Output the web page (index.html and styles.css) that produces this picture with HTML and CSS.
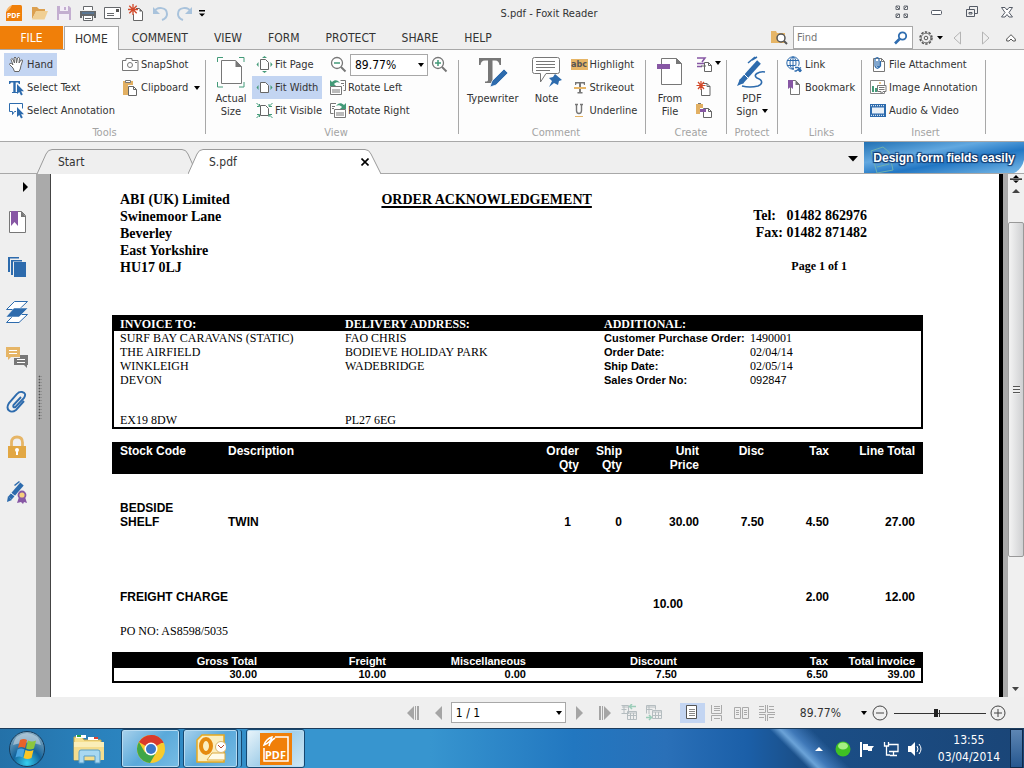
FILE: index.html
```html
<!DOCTYPE html>
<html lang="en">
<head>
<meta charset="utf-8">
<title>S.pdf - Foxit Reader</title>
<link rel="stylesheet" href="styles.css">
</head>
<body>
<div class="app">
<header class="titlebar">
  <div class="quick">
    <button class="ib" aria-label="Foxit Reader"><svg width="18" height="18" viewBox="0 0 18 18"><path d="M7 1h8.500q1.500 0 1.500 1.500V17H1V8z" fill="#f07f09"/><path d="M1 8c1-4 3-6 6-7-1 3-3 5-6 7z" fill="#f9b466"/><text x="2" y="14" font-size="7" font-weight="bold" fill="#fff">PDF</text></svg></button>
    <button class="ib" aria-label="Open"><svg width="18" height="16" viewBox="0 0 18 16"><path d="M1 14V2h5l2 2h6v3H5z" fill="#dca050"/><path d="M1 14.500L5 6h12l-3.500 8.500z" fill="#f0cf94"/></svg></button>
    <button class="ib" aria-label="Save"><svg width="16" height="16" viewBox="0 0 16 16"><path d="M1 1h12l2 2v12H1z" fill="#c3aed0"/><path d="M4 1h8v5H4zM3 9h10v6H3z" fill="#f3eef6"/><path d="M8 2h2v3H8z" fill="#c3aed0"/></svg></button>
    <button class="ib" aria-label="Print"><svg width="18" height="17" viewBox="0 0 18 17"><path d="M4.500 5V1.500h9V5" fill="#fff" stroke="#66696c"/><path d="M1 6h16v7h-2v-2H3v2H1z" fill="#66696c"/><path d="M3 8h12" stroke="#4f86bb"/><path d="M4.500 11v4.500h9V11M6 13.500h6" fill="#fff" stroke="#66696c"/></svg></button>
    <button class="ib" aria-label="Email"><svg width="17" height="14" viewBox="0 0 17 14"><path d="M.5 1.500h16v11H.5z" fill="#fff" stroke="#66696c"/><path d="M3 7.500h7M3 9.500h7" stroke="#66696c"/><path d="M12 3h3v3h-3z" fill="#555"/></svg></button>
    <button class="ib" aria-label="New"><svg width="18" height="18" viewBox="0 0 18 18"><path d="M9 4.500h3.500l3 3v9h-9V10" fill="#fff" stroke="#666"/><path d="M12.500 4.500v3h3" fill="#666"/><path d="M6 0v11M1 5.500h10M2.300 1.800l7.400 7.400M9.700 1.800L2.300 9.200" stroke="#d2492a" stroke-width="1.300"/></svg></button>
    <button class="ib" aria-label="Undo"><svg width="17" height="16" viewBox="0 0 17 16"><path d="M2 7c3-6 13-5 13 2 0 3-2 5-5 6" fill="none" stroke="#a9c3dc" stroke-width="2"/><path d="M1 2v7h7z" fill="#a9c3dc"/></svg></button>
    <button class="ib" aria-label="Redo"><svg width="17" height="16" viewBox="0 0 17 16"><path d="M15 7C12 1 2 2 2 9c0 3 2 5 5 6" fill="none" stroke="#a9c3dc" stroke-width="2"/><path d="M16 2v7H9z" fill="#a9c3dc"/></svg></button>
    <button class="ib narrow" aria-label="Customize"><svg width="6" height="7" viewBox="0 0 6 7"><path d="M0 0h6v1.500H0zM0 3.500h6L3 6.500z" fill="#000"/></svg></button>
  </div>
  <h1>S.pdf - Foxit Reader</h1>
  <div class="winbtns">
    <button class="ib" aria-label="Full screen"><svg width="14" height="14" viewBox="0 0 14 14" fill="none" stroke="#666b73"><path d="M1 1h3.500v3.500H1zM9 1h3.500v3.500H9zM1 9h3.500v3.500H1zM9 9h3.500v3.500H9z"/><path d="M1 1l3 3M12 1L9 4M1 12l3-3M12 12L9 9"/></svg></button>
    <button class="ib" aria-label="Minimize"><svg width="12" height="5" viewBox="0 0 12 5"><rect x=".5" y=".5" width="10" height="4" rx="1" fill="#fff" stroke="#555b66"/></svg></button>
    <button class="ib" aria-label="Restore"><svg width="12" height="12" viewBox="0 0 12 12" fill="none" stroke="#555b66"><path d="M3.500 3V.5h8v7H9M.5 3.500h8v7h-8zM3 6.500h3v1.500H3z"/></svg></button>
    <button class="ib" aria-label="Close"><svg width="12" height="11" viewBox="0 0 12 11"><path d="M.5.5h3.500l2 2.500 2-2.500h3.500L8 5.500l3.500 4.500H8L6 7.500 4 10H.5L4 5.500z" fill="#fff" stroke="#555b66"/></svg></button>
  </div>
</header>
<nav class="menu">
  <button class="file">FILE</button>
  <button class="on">HOME</button>
  <button>COMMENT</button><button>VIEW</button><button>FORM</button><button>PROTECT</button><button>SHARE</button><button>HELP</button>
  <div class="find">
    <svg width="17" height="15" viewBox="0 0 17 15"><path d="M0 13V1h5l1 2h8v10z" fill="#e6b566"/><circle cx="10" cy="8" r="4" fill="#fff" stroke="#555" stroke-width="1.500"/><path d="M13 11l3 3" stroke="#555" stroke-width="2"/></svg>
    <div class="findbox"><input type="text" placeholder="Find" aria-label="Find"><button class="plain" aria-label="Search"><svg width="14" height="14" viewBox="0 0 14 14" fill="none" stroke="#2f6db0"><circle cx="8.500" cy="5" r="3.700" stroke-width="1.800"/><path d="M5.500 8L1 12.500" stroke-width="2.600"/></svg></button></div>
    <button class="plain gear" aria-label="Settings"><svg width="24" height="14" viewBox="0 0 24 14"><circle cx="7" cy="7" r="6" fill="none" stroke="#555" stroke-width="1.500" stroke-dasharray="2.400 1.370"/><circle cx="7" cy="7" r="4.800" fill="#efefef" stroke="#555" stroke-width=".8"/><circle cx="7" cy="7" r="1.800" fill="none" stroke="#555"/><path d="M18 5h6l-3 3.500z"/></svg></button>
    <button class="plain" aria-label="Previous"><svg width="9" height="14" viewBox="0 0 9 14"><path d="M7.500 1v12L1 7z" fill="none" stroke="#b4b4b4"/></svg></button>
    <button class="plain nx" aria-label="Next"><svg width="9" height="14" viewBox="0 0 9 14"><path d="M1.500 1v12L8 7z" fill="none" stroke="#b4b4b4"/></svg></button>
    <button class="plain" aria-label="Collapse ribbon"><svg width="10" height="8" viewBox="0 0 10 8"><path d="M5 .7l4.300 4.300v2H7L5 5 3 7H.7V5z" fill="#fff" stroke="#555"/></svg></button>
  </div>
</nav>
<section class="ribbon">
  <div class="group tools">
    <div class="cols">
      <div class="col">
        <button class="cmd sel"><svg width="17" height="17" viewBox="0 0 17 17"><path d="M5 12L1.500 8.500q0-2 2 -1L5 9 3 3.500q.5-2 2 0L6.500 7 6 2q1-2 2 0l.5 5 1-5q1.500-1.500 2 .2L11 7l2-3q1.700-.6 1.500 1L13 9.500q-.5 4-2 6H6.500z" fill="#fff" stroke="#666"/></svg>Hand</button>
        <button class="cmd"><svg width="17" height="17" viewBox="0 0 17 17"><path d="M1 2h11v3h-1l-1-1.500H7.700V13H9v1H4v-1h1.300V3.500H3L2 5H1z" fill="#2d6bad"/><path d="M9 5v10l2.300-2 1.700 3.500 1.800-.9-1.700-3.400H16z" fill="#2d6bad"/></svg>Select Text</button>
        <button class="cmd"><svg width="17" height="17" viewBox="0 0 17 17"><path d="M8 9.500H6.500l-2 3v-3h-3v-8h13v5" fill="#fff" stroke="#2d6bad"/><path d="M9 5v10l2.300-2 1.700 3.500 1.800-.9-1.700-3.400H16z" fill="#2d6bad"/></svg>Select Annotation</button>
      </div>
      <div class="col">
        <button class="cmd"><svg width="17" height="13" viewBox="0 0 17 13"><path d="M.5 2.500H4V.5h6v2h6v10H.5z" fill="#fff" stroke="#777"/><circle cx="8" cy="7" r="2.500" fill="none" stroke="#777"/><path d="M13 4.500h2" stroke="#777"/></svg>SnapShot</button>
        <button class="cmd"><svg width="17" height="17" viewBox="0 0 17 17"><path d="M2 2h9v4H6v10H1V2z" fill="#e2b063"/><path d="M3.500 3.500v-2h5v2z" fill="#fff" stroke="#777"/><path d="M6.500 7.500h5l3 3v6h-8z" fill="#fff" stroke="#666"/><path d="M11.500 7.500v3h3" fill="none" stroke="#666"/></svg>Clipboard<i class="dn"></i></button>
      </div>
    </div>
    <p>Tools</p>
  </div><span class="sep"></span>
  <div class="group view">
    <div class="cols">
      <button class="big"><svg width="30" height="32" viewBox="0 0 30 32"><path d="M1.500 6V1.500H7M23 1.500h5V6M1.500 26v5H7M23 31h5v-5" fill="none" stroke="#439a78"/><path d="M5.500 4.500h14l6 6v17h-20z" fill="#fff" stroke="#777"/><path d="M19.500 4v7h6.500z" fill="#777"/></svg>Actual<br>Size</button>
      <div class="col fit">
        <button class="cmd"><svg width="17" height="17" viewBox="0 0 17 17"><path d="M4.500 3.500h5l3 3v7h-8z" fill="#fff" stroke="#666"/><path d="M6 2l2.500-2L11 2zM6 15l2.500 2 2.500-2zM2.500 6v5L.5 8.500zM14.500 6v5l2-2.500z" fill="#439a78"/></svg>Fit Page</button>
        <button class="cmd sel"><svg width="17" height="17" viewBox="0 0 17 17"><path d="M4.500 3.500h5l3 3v7h-8z" fill="#fff" stroke="#666"/><path d="M2.500 6v5L.5 8.500zM14.500 6v5l2-2.500z" fill="#439a78"/></svg>Fit Width</button>
        <button class="cmd"><svg width="17" height="17" viewBox="0 0 17 17"><path d="M4.500 3.500h5l3 3v7h-8z" fill="#fff" stroke="#666"/><path d="M1 4.500h2.500V2M.5 1l3 3M13 2v2.500h3M16.500 1l-3 3M1 12.500h2.500V15M.5 16l3-3M13 15v-2.500h3M16.500 16l-3-3" fill="none" stroke="#439a78"/></svg>Fit Visible</button>
      </div>
      <div class="col rot">
        <div class="zoomrow"><button class="plain" aria-label="Zoom out"><svg width="17" height="17" viewBox="0 0 17 17"><circle cx="7" cy="7" r="5.500" fill="#fff" stroke="#777" stroke-width="1.300"/><path d="M11 11l4.500 4.500" stroke="#777" stroke-width="2"/><path d="M4 7h6" stroke="#439a78" stroke-width="1.500"/></svg></button>
        <span class="combo"><select aria-label="Zoom"><option>89.77%</option></select></span>
        <button class="plain" aria-label="Zoom in"><svg width="17" height="17" viewBox="0 0 17 17"><circle cx="7" cy="7" r="5.500" fill="#fff" stroke="#777" stroke-width="1.300"/><path d="M11 11l4.500 4.500" stroke="#777" stroke-width="2"/><path d="M4 7h6M7 4v6" stroke="#439a78" stroke-width="1.500"/></svg></button></div>
        <button class="cmd"><svg width="17" height="17" viewBox="0 0 17 17"><path d="M10.500 1.500h5v10h-2M11 4.500h3M13 6.500h1M.5 7.500h11v8H.5z" fill="#fff" stroke="#777"/><path d="M3 10v4M5 10v4M7 10v4M9 10v4" stroke="#777"/><path d="M0 1v6h6L4 5c2-2 4-2 6-1C8 1 5 0 2 3z" fill="#439a78"/></svg>Rotate Left</button>
        <button class="cmd"><svg width="17" height="17" viewBox="0 0 17 17"><path d="M6 1.500H.5v10h3M2 4.500h3M2 6.500h2M4.500 7.500h11v8h-11z" fill="#fff" stroke="#777"/><path d="M7 10v4M9 10v4M11 10v4M13 10v4" stroke="#777"/><path d="M16 1v6h-6l2-2c-2-2-4-2-6-1C8 1 11 0 14 3z" fill="#439a78"/></svg>Rotate Right</button>
      </div>
    </div>
    <p>View</p>
  </div><span class="sep"></span>
  <div class="group comment">
    <div class="cols">
      <button class="big"><svg width="32" height="32" viewBox="0 0 32 32"><path d="M2 2h22v7h-1.500c-.5-3-1.500-4.500-4.500-4.500h-2.500V24c0 1 1 1.500 3 1.500V27H8v-1.500c2 0 3-.5 3-1.500V4.500H8C5 4.500 4 6 3.500 9H2z" fill="#777"/><path d="M15 25L27 13l4 4-12 12-6 2z" fill="#2d6bad" stroke="#fff" stroke-width=".7"/></svg>Typewriter</button>
      <button class="big note"><svg width="32" height="32" viewBox="0 0 32 32"><path d="M3.500 1.500h23q2 0 2 2v12q0 2-2 2H15L9.500 26v-8.500h-6q-2 0-2-2v-12q0-2 2-2z" fill="#fff" stroke="#777"/><path d="M5 5.500h19M5 8.500h19M5 11.500h19M5 14.500h14" stroke="#777"/><path d="M24 18l7 6-3 1-1 4-4-2-5 4 3-6-3-3 4-1z" fill="#2d6bad"/></svg>Note</button>
      <div class="col">
        <button class="cmd"><span class="abc">abc</span>Highlight</button>
        <button class="cmd"><svg width="17" height="15" viewBox="0 0 17 15"><path d="M4 2h10v3h-1l-.5-1.500H10V12h1.500v1.500h-5V12H8V3.500H5.500L5 5H4z" fill="#777"/><path d="M3 8h12" stroke="#e6b566" stroke-width="2"/></svg>Strikeout</button>
        <button class="cmd"><svg width="17" height="15" viewBox="0 0 17 15"><path d="M4 1.500h3M9 1.500h3M5.500 1.500v6q0 3 2.500 3t2.500-3v-6" fill="none" stroke="#777" stroke-width="1.400"/><path d="M4 13.500h8" stroke="#e6b566"/></svg>Underline</button>
      </div>
    </div>
    <p>Comment</p>
  </div><span class="sep"></span>
  <div class="group create">
    <div class="cols">
      <button class="big"><svg width="28" height="32" viewBox="0 0 28 32"><path d="M5.500 2.500h15l5 5v21h-20z" fill="#fff" stroke="#777"/><path d="M20 2v6h6z" fill="#777"/><path d="M1 8h13v5H1z" fill="#8757a4"/></svg>From<br>File</button>
      <div class="col">
        <button class="cmd" aria-label="From scanner"><svg width="17" height="16" viewBox="0 0 17 16"><path d="M1 1h8l-3 4M1 6.500h7M1 9.500h5" fill="none" stroke="#8757a4" stroke-width="1.500"/><path d="M8.500 5.500h4l3 3v6h-7z" fill="#fff" stroke="#666"/><path d="M12.500 5.500v3h3M5 9h5" fill="none" stroke="#666"/></svg><i class="dn"></i></button>
        <button class="cmd" aria-label="Blank"><svg width="17" height="16" viewBox="0 0 17 16"><path d="M7 3.500h4l3 3v9H5.500V9" fill="#fff" stroke="#666"/><path d="M11 3.500v3h3" fill="none" stroke="#666"/><path d="M5 1v9M.5 5.500h9M2 2l6 7M8 2L2 9" stroke="#d2492a" stroke-width="1.200"/></svg></button>
        <button class="cmd" aria-label="From clipboard"><svg width="17" height="17" viewBox="0 0 17 17"><path d="M0 2h7v4H4v6H0z" fill="#e2b063"/><path d="M2 1.500h3" stroke="#777"/><path d="M7.500 6.500h5l3 3v6h-8z" fill="#fff" stroke="#666"/><path d="M12.500 6.500v3h3" fill="none" stroke="#666"/><path d="M4 7h6v3H4z" fill="#8757a4"/></svg></button>
      </div>
    </div>
    <p>Create</p>
  </div><span class="sep"></span>
  <div class="group protect">
    <div class="cols">
      <button class="big"><svg width="32" height="32" viewBox="0 0 32 32" fill="none" stroke="#2d6bad"><path d="M5 26L23 6" stroke-width="5"/><path d="M8 18l5 5" stroke="#fff"/><path d="M12 7l7-6M16 4l5-3" stroke-width="1.500"/><path d="M1 30l3-7 4 4z" fill="#2d6bad" stroke="none"/><path d="M29 16c-6-1-13 3-8 6 6 2 6 6 1 8q-8 2-16 0" stroke-width="1.600"/></svg>PDF<br><span>Sign<i class="dn"></i></span></button>
    </div>
    <p>Protect</p>
  </div><span class="sep"></span>
  <div class="group links">
    <div class="col">
      <button class="cmd"><svg width="17" height="17" viewBox="0 0 17 17" fill="none" stroke="#2d6bad"><circle cx="7" cy="7" r="6.200"/><ellipse cx="7" cy="7" rx="3" ry="6"/><path d="M1 4.500h12M1 9.500h8M7 1v12"/><path d="M8 10h8v6H8z" fill="#fff" stroke="none"/><path d="M9 11.500h3l3 3q-1 2-2 0l-1-1M15 11.500l-5 3.500H8.500" stroke-width="1.500"/></svg>Link</button>
      <button class="cmd"><svg width="17" height="15" viewBox="0 0 17 15"><path d="M4.500.5h5l4 4v10h-9z" fill="#fff" stroke="#777"/><path d="M9.500 0v5h4.500z" fill="#777"/><path d="M2 0h5v9L4.500 7 2 9z" fill="#8757a4"/></svg>Bookmark</button>
    </div>
    <p>Links</p>
  </div><span class="sep"></span>
  <div class="group insert">
    <div class="col">
      <button class="cmd"><svg width="17" height="17" viewBox="0 0 17 17"><path d="M3.500 2.500h8l3 3v10h-11z" fill="#fff" stroke="#777"/><path d="M11.500 2.500v3h3" fill="none" stroke="#777"/><path d="M7 5v5q1 2 2 0V3q-1.500-3-4 0v7q2 5 5.500 0V5" fill="none" stroke="#2d6bad" stroke-width="1.200"/></svg>File Attachment</button>
      <button class="cmd"><svg width="17" height="15" viewBox="0 0 17 15"><path d="M.5.5h14v13H.5z" fill="#fff" stroke="#888"/><path d="M2 12V6h2v6zM5 12V8h2v4z" fill="#439a78"/><circle cx="10" cy="3" r="1" fill="#e6b566"/><path d="M7.500 5.500h8.500v6h-3L11 14v-2.500H7.500zM9 7.500h5.500M9 9.500h5.500" fill="#fff" stroke="#777"/></svg>Image Annotation</button>
      <button class="cmd"><svg width="17" height="13" viewBox="0 0 17 13"><path d="M0 0h16v13H0z" fill="#2d6bad"/><path d="M2 3.500h12v6H2z" fill="#eaf1f8"/><path d="M1 1.700h14M1 11.300h14" stroke="#fff" stroke-dasharray="1 1"/></svg>Audio &amp; Video</button>
    </div>
    <p>Insert</p>
  </div><span class="sep"></span>
</section>
<div class="tabs">
  <button class="tab t1"><svg viewBox="0 0 160 25" preserveAspectRatio="none"><path d="M0 25L9 5Q11 .5 15 .5H145Q149 .5 151 5L160 25" fill="#efefef" stroke="#9a9a9a"/></svg><span>Start</span></button>
  <div class="tab t2"><svg viewBox="0 0 193 25" preserveAspectRatio="none"><path d="M0 25L9 5Q11 .5 15 .5H177Q181 .5 183 5L193 25" fill="#fff" stroke="#9a9a9a"/></svg><span>S.pdf</span><button class="plain" aria-label="Close tab"><svg width="8" height="8" viewBox="0 0 8 8"><path d="M.5.5l7 7M7.500.5l-7 7" stroke="#000" stroke-width="1.600"/></svg></button></div>
  <button class="plain list" aria-label="Tab list"><svg width="10" height="6" viewBox="0 0 10 6"><path d="M0 0h10L5 5.500z"/></svg></button>
  <a class="ad" href="#"><svg class="doc" width="30" height="31" viewBox="0 0 30 31" fill="none" stroke="#6fb0ae"><path d="M5 9l12-4 6 5 4 18-16 3zM8 13l8-2M9 17l12-3M10 21l12-3M11 25l12-3"/></svg><span>Design form fields easily</span><svg class="curl" width="10" height="13" viewBox="0 0 10 13"><path d="M10 0v13H0Q8 9 10 0z" fill="#f5f8fb"/></svg></a>
</div>
<main>
  <aside>
    <button class="plain arrow" aria-label="Expand"><svg width="5" height="10" viewBox="0 0 5 10"><path d="M0 0v10l5-5z"/></svg></button>
    <button class="plain" aria-label="Bookmarks"><svg width="24" height="24" viewBox="0 0 24 24"><path d="M4.500 1.500h12l4 4v17h-16z" fill="#fff" stroke="#777"/><path d="M16 1v6h5z" fill="#777"/><path d="M6 1h7v15l-3.500-4L6 16z" fill="#8757a4"/></svg></button>
    <button class="plain" aria-label="Pages"><svg width="24" height="24" viewBox="0 0 24 24"><path d="M3 2h11v1.500H5V17H3zM6 5h11v1.500H8V20H6zM9 7h12v15H9z" fill="#2d6bad"/></svg></button>
    <button class="plain" aria-label="Layers"><svg width="24" height="24" viewBox="0 0 24 24"><path d="M9.500 1.500h13L14 9.500H1.500zM9.500 14.500h13L14 22.500H1.500z" fill="#fff" stroke="#2d6bad"/><path d="M9 8h14l-9 9H1z" fill="#2d6bad" stroke="#fff" stroke-width=".5"/></svg></button>
    <button class="plain" aria-label="Comments"><svg width="24" height="24" viewBox="0 0 24 24"><path d="M1 2h14v10H6l-3 3v-3H1z" fill="#e6b566"/><path d="M4 5.500h8M4 8.500h8" stroke="#fff"/><path d="M9 13h6v-3h8v10h-1v3l-3-3H9z" fill="#777"/><path d="M12 14.500h8M12 17.500h8" stroke="#fff"/></svg></button>
    <button class="plain" aria-label="Attachments"><svg width="24" height="24" viewBox="0 0 24 24"><path d="M16 7L8.500 15q-1 3 2 2L19 8q3-5-2-6-3-.5-5 2L4 13q-3 5 0 7.500t7-.5l8-9" fill="none" stroke="#2d6bad" stroke-width="1.900"/></svg></button>
    <button class="plain" aria-label="Security"><svg width="24" height="24" viewBox="0 0 24 24"><path d="M6.500 12V7.500q0-5.500 5.500-5.500t5.500 5.500V12" fill="none" stroke="#e6b566" stroke-width="2.800"/><path d="M3 11h18v12H3z" fill="#e2a743"/><circle cx="12" cy="15" r="2" fill="#fff"/><path d="M11 15h2v5h-2z" fill="#fff"/></svg></button>
    <button class="plain" aria-label="Signatures"><svg width="24" height="24" viewBox="0 0 24 24"><path d="M5 18L17 4" stroke="#2d6bad" stroke-width="4.500"/><path d="M2 22l1-6 4 4zM9 5l5-4 1 1-5 4z" fill="#2d6bad"/><path d="M6 13l5 4" stroke="#fff"/><path d="M14 17l-2 6 4-1 2 2 1-2 3 1-2-6" fill="#8757a4"/><circle cx="17" cy="15" r="3.500" fill="#f6cf7b" stroke="#8757a4" stroke-width="1.800"/></svg></button>
  </aside>
  <div class="split"><i></i></div>
  <article class="page">
    <div class="head">
      <address>ABI (UK) Limited<br>Swinemoor Lane<br>Beverley<br>East Yorkshire<br>HU17 0LJ</address>
      <h2>ORDER ACKNOWLEDGEMENT</h2>
      <div class="tel"><span>Tel: &nbsp; 01482 862976</span><span>Fax: 01482 871482</span><b>Page 1 of 1</b></div>
    </div>
    <table class="info">
      <colgroup><col class="i1"><col class="i2"><col class="i3"><col></colgroup>
      <thead><tr><th>INVOICE TO:</th><th>DELIVERY ADDRESS:</th><th colspan="2">ADDITIONAL:</th></tr></thead>
      <tbody>
      <tr><td>SURF BAY CARAVANS (STATIC)</td><td>FAO CHRIS</td><th>Customer Purchase Order:</th><td>1490001</td></tr>
      <tr><td>THE AIRFIELD</td><td>BODIEVE HOLIDAY PARK</td><th>Order Date:</th><td>02/04/14</td></tr>
      <tr><td>WINKLEIGH</td><td>WADEBRIDGE</td><th>Ship Date:</th><td>02/05/14</td></tr>
      <tr><td>DEVON</td><td></td><th>Sales Order No:</th><td class="nar">092847</td></tr>
      <tr class="blank"><td></td><td></td><td></td><td></td></tr>
      <tr class="blank"><td></td><td></td><td></td><td></td></tr>
      <tr><td>EX19 8DW</td><td>PL27 6EG</td><td></td><td></td></tr>
      </tbody>
    </table>
    <table class="items">
      <colgroup><col class="c1"><col><col class="c3"><col class="c4"><col class="c5"><col class="c6"><col class="c6"><col class="c8"></colgroup>
      <thead><tr><th>Stock Code</th><th>Description</th><th>Order<br>Qty</th><th>Ship<br>Qty</th><th>Unit<br>Price</th><th>Disc</th><th>Tax</th><th>Line Total</th></tr></thead>
      <tbody>
      <tr class="r1"><td>BEDSIDE<br>SHELF</td><td>TWIN</td><td class="q">1</td><td>0</td><td>30.00</td><td>7.50</td><td>4.50</td><td>27.00</td></tr>
      <tr class="r2"><td colspan="2">FREIGHT CHARGE</td><td></td><td></td><td class="fc">10.00</td><td></td><td>2.00</td><td>12.00</td></tr>
      </tbody>
    </table>
    <p class="po">PO NO: AS8598/5035</p>
    <table class="totals">
      <colgroup><col class="g1"><col class="g2"><col class="g3"><col class="g4"><col class="g4"><col></colgroup>
      <thead><tr><th>Gross Total</th><th>Freight</th><th>Miscellaneous</th><th>Discount</th><th>Tax</th><th>Total invoice</th></tr></thead>
      <tbody><tr><td>30.00</td><td>10.00</td><td>0.00</td><td>7.50</td><td>6.50</td><td>39.00</td></tr></tbody>
    </table>
  </article>
  <div class="scroll">
    <svg width="12" height="8" viewBox="0 0 12 8"><path d="M6 0l3 3H3zM0 3.500h12v1.200H0zM6 8L3 5.500h6z"/></svg>
    <svg width="8" height="4" viewBox="0 0 8 4"><path d="M0 4l4-4 4 4z" fill="#444"/></svg>
    <div class="track"><div class="thumb"><i></i></div></div>
    <svg width="7" height="4" viewBox="0 0 7 4"><path d="M0 0h7L3.500 4z" fill="#444"/></svg>
  </div>
</main>
<footer class="status">
  <button class="sb" aria-label="First page"><svg width="13" height="14" viewBox="0 0 13 14"><path d="M7 0v14L0 7zM8 0h1v14H8zM12 0v14H10V0z" fill="#a5a5a5"/></svg></button>
  <button class="sb" aria-label="Previous page"><svg width="7" height="14" viewBox="0 0 7 14"><path d="M7 0v14L0 7z" fill="#a5a5a5"/></svg></button>
  <span class="combo pg"><select aria-label="Page"><option>1 / 1</option></select></span>
  <button class="sb" aria-label="Next page"><svg width="7" height="14" viewBox="0 0 7 14"><path d="M0 0v14l7-7z" fill="#a5a5a5"/></svg></button>
  <button class="sb" aria-label="Last page"><svg width="13" height="14" viewBox="0 0 13 14"><path d="M6 0v14l7-7zM4 0h1v14H4zM1 0v14h2V0z" fill="#a5a5a5"/></svg></button>
  <button class="sb" aria-label="Previous view"><svg width="17" height="17" viewBox="0 0 17 17" fill="none" stroke="#b5bdc0"><path d="M.5 1.500h7v8H5M1 3h7M.5 5.500h5M3 1v9M.5 9.500H5M6.500 7.500h9v8h-9zM6 9h10M6.500 11.500h9M9.500 9v7M12.500 9v7"/><path d="M15 2.500H9M11 0L8.500 2.500 11 5" stroke="#9bcdb9" stroke-width="1.500"/></svg></button>
  <button class="sb" aria-label="Next view"><svg width="17" height="17" viewBox="0 0 17 17" fill="none" stroke="#b5bdc0"><path d="M.5 9.500v-8h9v4M1 3h9M.5 5.500h6M3 1v9M6.500 6.500h9v8h-9zM6 8h10M6.500 11.500h9M9.500 8v7M12.500 8v7"/><path d="M0 13.500h5M3 11l2.500 2.500L3 16" stroke="#9bcdb9" stroke-width="1.500"/></svg></button>
  <button class="sb sel" aria-label="Single page"><svg width="12" height="15" viewBox="0 0 12 15"><path d="M.5.5h10v13H.5z" fill="#fff" stroke="#555"/><path d="M3 4.500h6M3 6.500h6M3 8.500h6M3 10.500h6" stroke="#888"/></svg></button>
  <button class="sb" aria-label="Continuous"><svg width="12" height="16" viewBox="0 0 12 16" fill="none" stroke="#aaa"><path d="M.5 0v8.500h10V0M.5 16v-5.500h10V16M3 1.500h6M3 3.500h6M3 5.500h6M3 13.500h6"/></svg></button>
  <button class="sb" aria-label="Facing"><svg width="16" height="12" viewBox="0 0 16 12" fill="none" stroke="#aaa"><path d="M.5.500h6v11h-6zM8.500.5h6v11h-6zM2 3.500h3M2 5.500h3M2 7.500h3M10 3.500h3M10 5.500h3M10 7.500h3"/></svg></button>
  <button class="sb" aria-label="Continuous facing"><svg width="16" height="16" viewBox="0 0 16 16" fill="none" stroke="#aaa"><path d="M6.500 0v7.500H0M8.500 0v7.500H16M6.500 16V9.500H0M8.500 16V9.500H16M0 1.500h5M0 4.500h5M10 1.500h5M10 4.500h5M0 12.500h5M10 12.500h5"/></svg></button>
  <span class="pct">89.77%</span><i class="dn"></i>
  <button class="plain" aria-label="Zoom out"><svg width="16" height="16" viewBox="0 0 16 16" fill="none" stroke="#444"><circle cx="8" cy="8" r="7"/><path d="M4 8h8"/></svg></button>
  <input type="range" aria-label="Zoom level" value="46">
  <button class="plain" aria-label="Zoom in"><svg width="16" height="16" viewBox="0 0 16 16" fill="none" stroke="#444"><circle cx="8" cy="8" r="7"/><path d="M4 8h8M8 4v8"/></svg></button>
</footer>
<div class="taskbar">
  <button class="plain start" aria-label="Start"><svg width="38" height="38" viewBox="0 0 38 38"><defs><radialGradient id="orb" cx=".5" cy=".9" r=".9"><stop offset="0" stop-color="#35d0f0"/><stop offset=".45" stop-color="#14649c"/><stop offset="1" stop-color="#8fb0c4"/></radialGradient></defs><circle cx="19" cy="19" r="17.500" fill="url(#orb)" stroke="#163c5c"/><path d="M5 15q2-11 14-12 12 1 14 12-14-5-28 0z" fill="#c6d7e2" opacity=".6"/><path d="M12 10q4-2 7 0l-2 8q-4-2-7 0z" fill="#e8622a"/><path d="M20 10.500q4 2 8 0l-2 8q-4 2-8 0z" fill="#8cc63e"/><path d="M9.500 19.500q4-2 7 0l-2 8q-3-2-7 0z" fill="#4aa5e0"/><path d="M17.500 20q4 2 8 0l-2 8q-4 2-8 0z" fill="#fbc624"/></svg></button>
  <button class="plain expl" aria-label="Explorer"><svg width="34" height="32" viewBox="0 0 34 32"><path d="M2 4h8l2 3h17v20H2z" fill="#f6e08f" stroke="#c9a84c"/><path d="M4 2h10v3H4z" fill="#fff"/><path d="M5 2h4v2H5z" fill="#2aa545"/><path d="M16 4h10v3H16z" fill="#fff"/><path d="M22 4h4v2h-4z" fill="#d94030"/><path d="M2 9h30v18H2z" fill="#f4dd8e"/><path d="M2 9h30v5H2z" fill="#faeeb8"/><path d="M7 30V19q0-2 2-2h17q2 0 2 2v11h-5v-7H12v7z" fill="#a8d8f2" stroke="#5b9fc8"/></svg></button>
  <button class="task" aria-label="Chrome"><svg width="30" height="30" viewBox="0 0 30 30"><circle cx="15" cy="15" r="14" fill="#f7cb2d"/><path d="M15 15L2.900 8A14 14 0 0 1 27.100 8z" fill="#d93a2b"/><path d="M15 1a14 14 0 0 1 12.600 8H15z" fill="#d93a2b"/><path d="M2.900 8A14 14 0 0 0 14 29l6.500-11L15 15 9 18.500z" fill="#3fa648"/><circle cx="15" cy="15" r="6.500" fill="#fff"/><circle cx="15" cy="15" r="5" fill="#3a78c9"/></svg></button>
  <button class="task stack" aria-label="Outlook"><svg width="30" height="30" viewBox="0 0 30 30"><path d="M1 6l5-5h22v27H1z" fill="#fbeebf" stroke="#e8a91e" stroke-width="1.500"/><ellipse cx="10" cy="12" rx="5" ry="7" fill="none" stroke="#e58a0e" stroke-width="4"/><path d="M11 26l5-7h13v7z" fill="#fffbe8" stroke="#dba93c"/><circle cx="25" cy="13" r="5.500" fill="#fff" stroke="#d9b66c"/><path d="M22 11l3 3 3-3" fill="none" stroke="#b5482c"/></svg></button>
  <button class="task act" aria-label="Foxit Reader"><svg width="32" height="32" viewBox="0 0 32 32"><path d="M0 0h32v32H0z" fill="#f07f09"/><path d="M15 4h13v24H4V15M4 12q2-6 8-8-1 5-8 8zM9 13q1-5 6-8" fill="none" stroke="#fff" stroke-width="1.500"/><text x="5" y="26" font-size="11" fill="#fff" font-weight="bold">PDF</text></svg></button>
  <div class="tray">
    <svg width="8" height="4" viewBox="0 0 8 4"><path d="M0 4l4-4 4 4z" fill="#fff"/></svg>
    <svg width="16" height="16" viewBox="0 0 16 16"><circle cx="8" cy="8" r="7.500" fill="#3fc124"/><ellipse cx="8" cy="5" rx="5" ry="3.500" fill="#a5ef83"/></svg>
    <svg width="16" height="16" viewBox="0 0 16 16"><path d="M1 1h2v15H1zM4 3h5v6H4zM9 5h6l-2 2.500V10H9z" fill="#fff"/></svg>
    <svg width="16" height="16" viewBox="0 0 16 16" fill="none" stroke="#fff"><path d="M1.500 1v4h4V1M3.500 5v9H7M6 3.500h9v7H6M10.500 11v3M7 14.500h7" stroke-width="1.300"/></svg>
    <svg width="16" height="16" viewBox="0 0 16 16"><path d="M1 5h3l4-4v14l-4-4H1z" fill="#fff"/><path d="M10 5q2 3 0 6M12 3q4 5 0 10" fill="none" stroke="#fff"/></svg>
    <time>13:55<br>03/04/2014</time>
    <button class="desk" aria-label="Show desktop"></button>
  </div>
</div>
</div>
</body>
</html>
```
FILE: styles.css
```css
*{box-sizing:border-box}
body{margin:0;font:12px "DejaVu Sans Condensed","Noto Sans",sans-serif;color:#333;background:#efefef}
button,input,select{font:inherit;color:inherit;margin:0}
button{border:0;padding:0;background:none;white-space:nowrap}
svg{display:block;flex:none}
p,h1,h2{margin:0;font-weight:normal}
.app{min-height:100vh;display:flex;flex-direction:column}
.dn{display:inline-block;border:3px solid transparent;border-top:4px solid #000;border-bottom:0;flex:none}
.ib,.plain{display:flex;align-items:center;justify-content:center}
.ib{width:24px;height:24px}
.ib.narrow{width:12px}

.titlebar{display:flex;align-items:center;height:26px;padding:0 5px 0 2px}
.quick,.winbtns{display:flex}
.quick .ib:first-child{margin-right:2px}
.titlebar h1{flex:1;text-align:center;font-size:11px}
.winbtns{gap:11px;margin-top:-2px}

.menu{display:flex;height:24px;align-items:stretch;border-bottom:1px solid #a8a8a8}
.menu>button{padding:0 13px;font-size:12px}
.menu>.file{width:63px;background:#f07f09;color:#fff}
.menu>.on{padding:0 10px;margin:0 0 -1px 1px;background:#fff;border:1px solid #a8a8a8;border-bottom:0}
.find{margin-left:auto;display:flex;align-items:center;padding-right:8px;font-size:11px}
.findbox{width:120px;height:23px;margin:0 6px 0 5px;display:flex;align-items:center;background:#fff;border:1px solid #a8a8a8;padding:0 4px 0 3px}
.findbox input{flex:1;min-width:0;border:0;padding:0;background:none;outline:0}
.gear{margin-right:10px}
.nx{margin:0 16px 0 19px}

.ribbon{display:flex;height:92px;background:#fdfdfd;border-bottom:1px solid #a8a8a8;font-size:11px}
.sep{width:1px;background:#a8a8a8;margin:10px 0 7px}
.group{display:flex;flex-direction:column;justify-content:space-between;padding:3px 0 1px}
.group p{text-align:center;color:#a3a3a3;line-height:15px;font-size:11px}
.cols{display:flex}
.col{display:flex;flex-direction:column;align-items:flex-start}
.cmd{display:flex;align-items:center;height:23px;gap:2px;padding:0 4px}
.cmd .dn{margin-left:4px}
.sel{background:#c3d5f2}
.big{display:flex;flex-direction:column;align-items:center;line-height:13px;padding-top:3px}
.big svg{margin-bottom:4px}
.big .dn{margin:0 0 2px 4px}
.tools{width:205px;padding-left:4px}
.tools .col:first-child{width:114px}
.view{width:252px;padding-left:8px}
.view .big{width:34px;margin-right:4px}
.fit{width:74px}
.rot{margin-left:2px}
.rot .cmd{padding:0 2px}
.rot .cmd{gap:1px}
.zoomrow{display:flex;height:23px;align-items:center;gap:3px;padding-left:2px}
.combo{position:relative;display:flex;width:78px;height:22px;font-size:12px}
.combo select{appearance:none;flex:1;width:100%;border:1px solid #a8a8a8;border-radius:0;background:#fff;color:#000;padding:0 4px}
.combo::after{content:"";position:absolute;right:4px;top:9px;border:3px solid transparent;border-top:4px solid #000;border-bottom:0;pointer-events:none}
.comment{width:186px;padding-left:8px}
.comment .note{margin:0 4px 0 12px}
.abc{width:17px;background:#e6b566;font-size:9px;font-weight:bold;line-height:11px;text-align:center;color:#555}
.create{width:80px;padding-left:10px}
.create .col{margin-left:8px}
.create .cmd .dn{margin:0 0 4px}
.protect{width:50px}
.protect .cols{justify-content:center}
.protect .big span{display:flex;align-items:center}
.links{width:83px;padding-left:4px}
.insert{width:123px;padding-left:4px}

.tabs{display:flex;height:32px;align-items:flex-end;border-bottom:1px solid #a8a8a8;padding-left:37px}
.tab{position:relative;height:25px;display:flex;align-items:center;padding:0 12px 0 21px;margin-bottom:-1px}
.tab>svg{position:absolute;inset:0;width:100%;height:100%}
.tab span,.tab button{position:relative}
.t1{width:160px}
.t2{width:193px;margin-left:-9px;justify-content:space-between}
.list{margin:0 6px 11px auto}
.ad{position:relative;width:160px;height:31px;display:flex;align-items:center;justify-content:center;overflow:hidden;background:linear-gradient(170deg,#2271b3,#62a8e0 35%,#2277c4 60%,#7bbbe8);color:#fff;font:bold 12px "Liberation Sans",Arial,sans-serif;text-decoration:none;white-space:nowrap;text-shadow:1px 1px 1px #123a6e,-1px -1px 1px #123a6e,1px -1px 1px #123a6e,-1px 1px 1px #123a6e}
.ad span{position:relative}
.doc{position:absolute;left:2px;top:0}
.curl{position:absolute;right:0;bottom:0}

main{flex:1;display:flex;background:#fff}
aside{width:36px;background:#efefef;display:flex;flex-direction:column;align-items:center;gap:21px;padding:36px 2px 0 0}
.arrow{margin:-28px 0 -3px 16px;height:10px}
.split{width:15px;background:#aaa;border-right:1px solid #444;display:flex;align-items:center;padding:0 0 76px 2px}
.split i{width:4px;height:45px;background:radial-gradient(circle,#555 40%,transparent 50%) 0 0/3px 3px}
.page{flex:1;padding:17px 76px 0 61px;color:#000;font-family:"Liberation Serif","Times New Roman",serif}
.head{display:flex;padding:0 56px 0 8px;height:124px;font-size:14px;line-height:17px;font-weight:bold}
address{font-style:normal;width:35%;flex:none}
.head h2{font-size:14px;font-weight:bold;text-decoration:underline;text-decoration-thickness:2px;text-underline-offset:2px}
.tel{margin-left:auto;display:flex;flex-direction:column;align-items:flex-end;padding-top:16px}
.tel b{font-size:12px;margin:17px 20px 0 0}
table{border-collapse:collapse;width:100%;table-layout:fixed}
td,th{padding:0;text-align:left;white-space:nowrap;vertical-align:top}
thead{background:#000;color:#fff}
.info{border:2px solid #000;font-size:12px;line-height:14px}
.info th,.info td{height:14px;padding-left:6px}
.info .blank td{height:13px}
.info tbody th,.nar{font-family:"Liberation Sans",Arial,sans-serif;font-size:11px}
.i1{width:226px}.i2{width:259px}.i3{width:146px}
.items{font:bold 12px/14px "Liberation Sans",Arial,sans-serif;margin-top:13px}
.items th{padding:2px 0}
.items th:nth-child(n+3),.items td:nth-child(n+3){text-align:right}
.items th:first-child,.items th:nth-child(2),.items td:first-child,.items td:nth-child(2){text-align:left;padding-left:8px}
.items th:last-child,.items td:last-child{padding-right:8px}
.c1{width:108px}.c3{width:59px}.c4{width:43px}.c5{width:77px}.c6{width:65px}.c8{width:94px}
.r1 td{padding-top:27px;vertical-align:bottom}
.items td.q{padding-right:8px}
.r2 td{padding-top:61px}
.items .r2 .fc{padding:68px 16px 0 0}
.po{font-size:12px;line-height:14px;padding:13px 8px 14px}
.totals{border:2px solid #000;font:bold 11px/14px "Liberation Sans",Arial,sans-serif}
.totals th,.totals td{text-align:right}
.totals td{line-height:13px}
.totals th:last-child,.totals td:last-child{padding-right:6px}
.g1{width:144px}.g2{width:129px}.g3{width:140px}.g4{width:151px}
.scroll{width:25px;border-left:4px solid #000;background:linear-gradient(90deg,#aaa 5px,#f0f0f0 5px);display:flex;flex-direction:column;align-items:center;padding:1px 0 6px 4px;gap:6px}
.track{flex:1;align-self:stretch;padding:23px 0 0 1px}
.thumb{height:335px;border:1px solid #999;border-radius:2px;background:linear-gradient(90deg,#f4f4f4,#cfd0d2);display:flex;align-items:center;justify-content:center}
.thumb i{width:7px;height:8px;background:repeating-linear-gradient(#555 0 1px,#eee 1px 3px)}

.status{height:31px;display:flex;align-items:center;justify-content:flex-end;padding-right:18px}
.sb{width:25px;height:20px;display:flex;align-items:center;justify-content:center}
.status .sel{margin-left:13px}
.pg{width:115px;height:21px}
.pg+.sb{margin-left:1px}
.pct{margin:0 20px 0 20px}
.status .dn{margin-right:5px}
.status input{appearance:none;width:92px;height:16px;margin:0 4px 0 6px;background:linear-gradient(#333,#333) 0 8px/100% 1px no-repeat,linear-gradient(#333,#333) 45px 5px/1px 7px no-repeat}
.status input::-webkit-slider-thumb{appearance:none;width:4px;height:8px;background:#222}

.taskbar{height:40px;display:flex;align-items:center;border-top:1px solid #1c3c5c;padding-left:8px;background:linear-gradient(45deg,transparent 76%,#6ba3d8 77%,#3f78b8 78%,transparent 80%),linear-gradient(90deg,#2471a8 0,#2a82bd 10%,#3795cf 30%,#3795cf 42%,#2277c0 56%,#2a70b8 65%,#1b5fa8 73%,#1b4f88 78%,#1a4577)}
.expl{margin:0 15px 0 26px}
.task{width:59px;height:39px;border:1px solid #174870;border-radius:3px;display:flex;align-items:center;justify-content:center;background:linear-gradient(135deg,#a9d2ec,#5aa9da 50%,#77bce4);box-shadow:inset 0 0 0 1px #b8dcf2;margin-right:3px}
.stack{width:55px;margin-right:8px;box-shadow:inset 0 0 0 1px #b8dcf2,4px 0 0 -1px #5aa9da,5px 0 0 -1px #174870}
.act{background:linear-gradient(135deg,#eaf5fb,#a3cfe9 50%,#cfe8f5)}
.taskbar text,.quick text{font-family:"Noto Sans",sans-serif}
.tray{margin-left:auto;display:flex;align-items:center;align-self:stretch;gap:8px;color:#fff}
.tray svg:first-child{margin-right:4px}
.tray time{text-align:center;line-height:17px;margin:0 2px 0 7px}
.desk{width:13px;align-self:stretch;border:1px solid #0e2a4c;background:linear-gradient(#5d86b4,#26578f);margin-right:1px}
```
